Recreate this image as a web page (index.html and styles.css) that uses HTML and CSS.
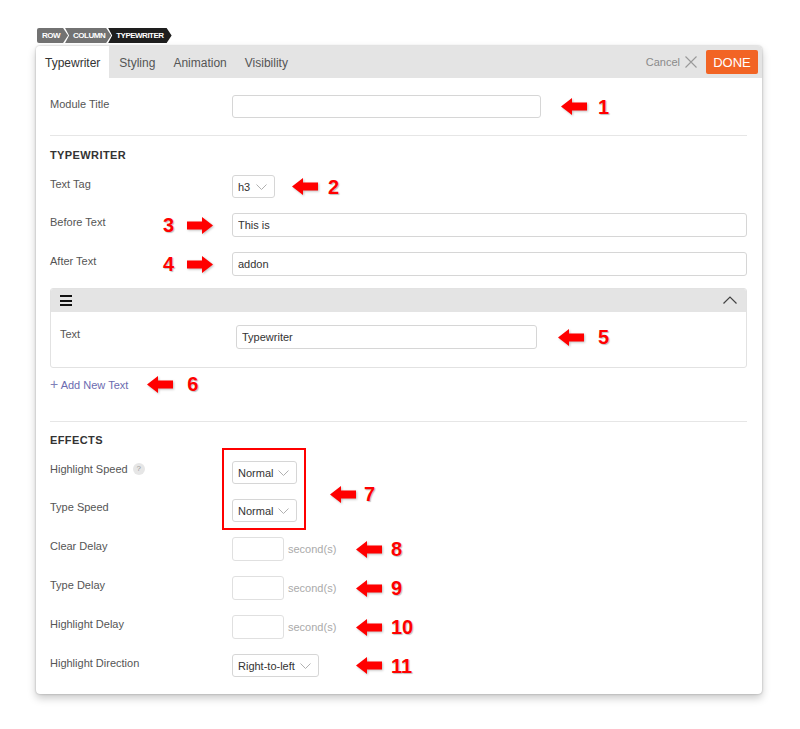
FILE: index.html
```html
<!DOCTYPE html>
<html lang="en">
<head>
<meta charset="utf-8">
<title>Typewriter module</title>
<link rel="stylesheet" href="styles.css">
</head>
<body>
<svg width="0" height="0" class="defs" aria-hidden="true">
  <defs>
    <symbol id="arrow-left" viewBox="0 0 26 17">
      <polygon points="0,8.5 11,0 11,4.5 26,4.5 26,12.5 11,12.5 11,17" fill="#ff0000"/>
    </symbol>
    <symbol id="arrow-right" viewBox="0 0 26 17">
      <polygon points="26,8.5 15,0 15,4.5 0,4.5 0,12.5 15,12.5 15,17" fill="#ff0000"/>
    </symbol>
    <symbol id="chev-down" viewBox="0 0 11 6">
      <polyline points="0.5,0.5 5.5,5.5 10.5,0.5" fill="none" stroke="#b0b0b0" stroke-width="1"/>
    </symbol>
  </defs>
</svg>
<div class="page">
  <div class="crumbs">
    <span class="crumb first">ROW</span>
    <span class="crumb">COLUMN</span>
    <span class="crumb dark">TYPEWRITER</span>
  </div>
  <div class="panel">
    <div class="tabbar">
      <div class="tabs">
        <span class="tab active">Typewriter</span>
        <span class="tab">Styling</span>
        <span class="tab">Animation</span>
        <span class="tab">Visibility</span>
      </div>
      <div class="actions">
        <span class="cancel">Cancel</span>
        <svg class="xicon" width="12" height="12" viewBox="0 0 12 12"><path d="M0.5 0.5 L11.5 11.5 M11.5 0.5 L0.5 11.5" stroke="#999" stroke-width="1.1"/></svg>
        <span class="done">DONE</span>
      </div>
    </div>
    <div class="content">
      <div class="row">
        <div class="label">Module Title</div>
        <input class="field w-title" type="text" value="">
        <div class="note ml20"><svg class="arr"><use href="#arrow-left"/></svg><span class="num g11">1</span></div>
      </div>
      <div class="divider d1"></div>
      <div class="heading h-type">TYPEWRITER</div>
      <div class="row mt12">
        <div class="label">Text Tag</div>
        <div class="select w-tag"><span>h3</span><svg class="chev"><use href="#chev-down"/></svg></div>
        <div class="note ml17"><svg class="arr"><use href="#arrow-left"/></svg><span class="num g10">2</span></div>
      </div>
      <div class="row mt15">
        <div class="label split"><span>Before Text</span><span class="note-in"><span class="num">3</span><svg class="arr"><use href="#arrow-right"/></svg></span></div>
        <input class="field tall grow" type="text" value="This is">
      </div>
      <div class="row mt15">
        <div class="label split"><span>After Text</span><span class="note-in"><span class="num">4</span><svg class="arr"><use href="#arrow-right"/></svg></span></div>
        <input class="field tall grow" type="text" value="addon">
      </div>
      <div class="repeater">
        <div class="rep-head">
          <span class="burger"><i></i><i></i><i></i></span>
          <svg class="chev-up" width="14" height="8" viewBox="0 0 14 8"><polyline points="0.5,7.5 7,1 13.5,7.5" fill="none" stroke="#444" stroke-width="1.2"/></svg>
        </div>
        <div class="rep-body">
          <div class="row">
            <div class="label rep-label">Text</div>
            <input class="field tall w-rep" type="text" value="Typewriter">
            <div class="note ml21"><svg class="arr"><use href="#arrow-left"/></svg><span class="num g14">5</span></div>
          </div>
        </div>
      </div>
      <div class="addrow">
        <span class="add"><span class="plus">+</span> Add New Text</span>
        <div class="note ml19"><svg class="arr"><use href="#arrow-left"/></svg><span class="num g14">6</span></div>
      </div>
      <div class="divider d2"></div>
      <div class="heading h-eff">EFFECTS</div>
      <div class="speed">
        <div class="speed-labels">
          <div class="label">Highlight Speed <span class="help">?</span></div>
          <div class="label">Type Speed</div>
        </div>
        <div class="redbox">
          <div class="select w-speed"><span>Normal</span><svg class="chev"><use href="#chev-down"/></svg></div>
          <div class="select w-speed"><span>Normal</span><svg class="chev"><use href="#chev-down"/></svg></div>
        </div>
        <div class="note ml24 low"><svg class="arr"><use href="#arrow-left"/></svg><span class="num g8">7</span></div>
      </div>
      <div class="row mt7">
        <div class="label">Clear Delay</div>
        <div class="ctl"><input class="field tall w-delay" type="text" value=""><span class="unit">second(s)</span></div>
        <div class="note"><svg class="arr"><use href="#arrow-left"/></svg><span class="num g9">8</span></div>
      </div>
      <div class="row mt15">
        <div class="label">Type Delay</div>
        <div class="ctl"><input class="field tall w-delay" type="text" value=""><span class="unit">second(s)</span></div>
        <div class="note"><svg class="arr"><use href="#arrow-left"/></svg><span class="num g9">9</span></div>
      </div>
      <div class="row mt15">
        <div class="label">Highlight Delay</div>
        <div class="ctl"><input class="field tall w-delay" type="text" value=""><span class="unit">second(s)</span></div>
        <div class="note"><svg class="arr"><use href="#arrow-left"/></svg><span class="num g9">10</span></div>
      </div>
      <div class="row mt15">
        <div class="label">Highlight Direction</div>
        <div class="ctl"><div class="select w-dir"><span>Right-to-left</span><svg class="chev"><use href="#chev-down"/></svg></div></div>
        <div class="note"><svg class="arr"><use href="#arrow-left"/></svg><span class="num g9">11</span></div>
      </div>
    </div>
  </div>
</div>
</body>
</html>
```

FILE: styles.css
```css
* { box-sizing: border-box; }
html, body { margin: 0; padding: 0; background: #fff; }
body { font-family: "Liberation Sans", Arial, sans-serif; color: #555; }
.defs { position: absolute; width: 0; height: 0; overflow: hidden; }

.page { padding: 28px 0 20px 36px; width: 770px; }

.crumbs { display: flex; height: 15px; margin-left: 1px; margin-bottom: 3px; }
.crumb {
  display: flex; align-items: center;
  background: #727272; color: #fff;
  font-size: 8px; font-weight: bold; letter-spacing: -0.5px;
  padding: 0 6px 0 8px; margin-left: -3px;
  clip-path: polygon(0 0, calc(100% - 5px) 0, 100% 50%, calc(100% - 5px) 100%, 0 100%, 4px 50%);
}
.crumb.first { margin-left: 0; padding-left: 5px; padding-right: 8px; border-radius: 2px 0 0 2px;
  clip-path: polygon(0 0, calc(100% - 5px) 0, 100% 50%, calc(100% - 5px) 100%, 0 100%); }
.crumb.dark { background: #1e1e1e; padding-right: 8px; }

.panel {
  width: 726px; background: #fff; border-radius: 4px;
  box-shadow: 0 4px 8px rgba(0,0,0,0.22), 0 0 2px rgba(0,0,0,0.3);
}
.tabbar { height: 32px; background: #e4e4e4; display: flex; justify-content: space-between; align-items: stretch; border-radius: 4px 4px 0 0; }
.tabs { display: flex; }
.tab { display: flex; align-items: center; padding: 1px 9px 0 9px; font-size: 12px; color: #555; }
.tab.active { background: #fff; color: #333; border-radius: 4px 0 0 0; }
.tab:nth-child(2) { padding-left: 10px; }
.actions { display: flex; align-items: center; padding-right: 4px; }
.cancel { font-size: 11px; color: #8a8a8a; }
.xicon { margin-left: 5px; }
.done {
  margin-left: 9px; background: #f26424; color: #fff; font-size: 13px;
  height: 24px; width: 52px; display: flex; align-items: center; justify-content: center;
  border-radius: 2px;
}

.content { padding: 17px 15px 17px 14px; }
.row { display: flex; align-items: flex-start; }
.mt12 { margin-top: 12px; }
.mt15 { margin-top: 15px; }
.mt7 { margin-top: 7px; }

.label { width: 182px; flex: none; font-size: 11px; line-height: 16px; padding-top: 1px; color: #555; }
.label.split { display: flex; justify-content: space-between; padding-top: 0; }
.label.split > span:first-child { padding-top: 1px; }
.note-in { display: flex; align-items: center; height: 24px; margin-right: 19px; }
.note-in .num { margin-right: 13px; }

.field {
  height: 23px; border: 1px solid #d6d6d6; border-radius: 3px;
  font-family: "Liberation Sans", Arial, sans-serif; font-size: 11px; color: #333;
  padding: 0 5px; margin: 0; background: #fff; outline: none;
}
.field.tall { height: 24px; }
.w-title { width: 309px; }
.grow { flex: 1; min-width: 0; }
.w-rep { width: 301px; }
.w-delay { width: 52px; border-color: #e0e0e0; }

.select {
  height: 23px; border: 1px solid #d6d6d6; border-radius: 3px; background: #fff;
  display: flex; align-items: center; justify-content: space-between;
  padding: 0 7px 0 5px; font-size: 11px; color: #333;
}
.chev { width: 11px; height: 6px; }
.w-tag { width: 43px; }
.w-speed { width: 65px; }
.w-dir { width: 87px; }

.note { display: flex; align-items: center; height: 16px; align-self: center; }
.arr { width: 26px; height: 17px; flex: none; filter: drop-shadow(1px 1px 1px rgba(0,0,0,0.25)); }
.num {
  font-family: "Liberation Sans", Arial, sans-serif; font-weight: bold; font-size: 20px; line-height: 16px;
  color: #ff0000; text-shadow: 1px 1px 1px rgba(0,0,0,0.25);
}
.ml17 { margin-left: 17px; }
.ml19 { margin-left: 19px; }
.ml20 { margin-left: 20px; }
.ml21 { margin-left: 21px; }
.ml24 { margin-left: 24px; }
.g8 { margin-left: 8px; }
.g9 { margin-left: 9px; }
.g10 { margin-left: 10px; }
.g11 { margin-left: 11px; }
.g14 { margin-left: 14px; }

.divider { height: 1px; background: #e6e6e6; }
.d1 { margin-top: 17px; }
.d2 { margin-top: 29px; }
.heading { font-size: 11px; font-weight: bold; color: #333; letter-spacing: 0.4px; }
.h-type { margin-top: 11px; line-height: 16px; }
.h-eff { margin-top: 11px; line-height: 15px; }

.repeater { margin-top: 12px; border: 1px solid #e2e2e2; border-radius: 3px; overflow: hidden; }
.rep-head { height: 23px; background: #e4e4e4; display: flex; align-items: center; justify-content: space-between; padding: 0 9px 0 9px; }
.burger { display: flex; flex-direction: column; gap: 2.5px; width: 12px; }
.burger i { display: block; height: 2px; background: #111; }
.chev-up { margin-bottom: 1px; }
.rep-body { padding: 13px 9px 18px 9px; }
.rep-label { width: 176px; }

.addrow { display: flex; align-items: center; margin-top: 8px; height: 16px; }
.add { font-size: 11px; color: #6b6bb0; line-height: 16px; }
.plus { font-size: 14px; font-weight: normal; color: #8080b8; }

.speed { display: flex; align-items: center; }
.speed-labels { width: 172px; flex: none; align-self: flex-start; padding-top: 12px; display: flex; flex-direction: column; gap: 15px; }
.speed-labels .label { height: 23px; width: auto; display: flex; align-items: flex-start; }
.help {
  display: inline-flex; width: 12px; height: 12px; border-radius: 50%; background: #e6e6e6;
  color: #999; font-size: 8px; align-items: center; justify-content: center; margin-left: 5px; margin-top: 2px;
}
.redbox { border: 2px solid #ff0000; padding: 11px 7px 6px 8px; display: flex; flex-direction: column; gap: 15px; }
.low { margin-top: 10px; }

.ctl { width: 124px; flex: none; display: flex; align-items: center; }
.unit { font-size: 11px; color: #aaa; margin-left: 4px; }
```
